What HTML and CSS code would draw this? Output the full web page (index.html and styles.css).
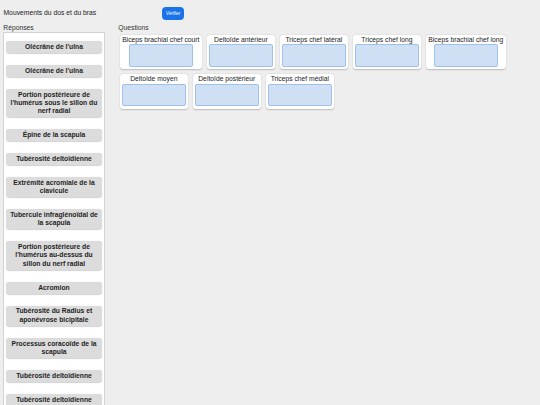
FILE: index.html
```html
<!DOCTYPE html>
<html lang="fr">
<head>
<meta charset="utf-8">
<title>Mouvements du dos et du bras</title>
<link rel="stylesheet" href="styles.css">
</head>
<body>
<header class="topbar">
  <h1 class="title">Mouvements du dos et du bras</h1>
  <button class="check-btn" type="button">Vérifier</button>
</header>
<main class="workspace">
  <section class="answers">
    <h2 class="section-label">Réponses</h2>
    <div class="answer-panel">
      <div class="answer">Olécrâne de l'ulna</div>
      <div class="answer">Olécrâne de l'ulna</div>
      <div class="answer">Portion postérieure de l'humérus sous le sillon du nerf radial</div>
      <div class="answer">Épine de la scapula</div>
      <div class="answer">Tubérosité deltoïdienne</div>
      <div class="answer">Extrémité acromiale de la clavicule</div>
      <div class="answer">Tubercule infraglénoïdal de la scapula</div>
      <div class="answer">Portion postérieure de l'humérus au-dessus du sillon du nerf radial</div>
      <div class="answer">Acromion</div>
      <div class="answer">Tubérosité du Radius et aponévrose bicipitale</div>
      <div class="answer">Processus coracoïde de la scapula</div>
      <div class="answer">Tubérosité deltoïdienne</div>
      <div class="answer">Tubérosité deltoïdienne</div>
    </div>
  </section>
  <section class="questions">
    <h2 class="section-label">Questions</h2>
    <div class="question-grid">
      <div class="question"><div class="q-label">Biceps brachial chef court</div><div class="drop"></div></div>
      <div class="question"><div class="q-label">Deltoïde antérieur</div><div class="drop"></div></div>
      <div class="question"><div class="q-label">Triceps chef latéral</div><div class="drop"></div></div>
      <div class="question"><div class="q-label">Triceps chef long</div><div class="drop"></div></div>
      <div class="question"><div class="q-label">Biceps brachial chef long</div><div class="drop"></div></div>
      <div class="question"><div class="q-label">Deltoïde moyen</div><div class="drop"></div></div>
      <div class="question"><div class="q-label">Deltoïde postérieur</div><div class="drop"></div></div>
      <div class="question"><div class="q-label">Triceps chef médial</div><div class="drop"></div></div>
    </div>
  </section>
</main>
</body>
</html>
```

FILE: styles.css
```css
html, body {
  margin: 0;
  padding: 0;
  height: 100%;
  overflow: hidden;
}
body {
  background: #eeeeee;
  font-family: "Liberation Sans", Arial, sans-serif;
  font-size: 6.75px;
  color: #222;
}
.topbar {
  display: flex;
  align-items: center;
  height: 13.3px;
  padding: 6.7px 0 0 3.5px;
}
.title {
  margin: 0;
  font-size: 6.75px;
  font-weight: normal;
  line-height: 8px;
  color: #222;
}
.check-btn {
  margin-left: 65.5px;
  width: 22.7px;
  height: 13.3px;
  padding: 0;
  border: none;
  border-radius: 4px;
  background: #1a73e8;
  color: #fff;
  font-family: "Liberation Sans", Arial, sans-serif;
  font-size: 4.5px;
  line-height: 13.3px;
}
.workspace {
  display: flex;
  align-items: flex-start;
  padding: 4.3px 0 0 3.3px;
}
.section-label {
  margin: 0;
  font-size: 6.75px;
  font-weight: normal;
  line-height: 8px;
  color: #333;
}
.answers {
  width: 101.4px;
  flex: none;
}
.answer-panel {
  box-sizing: border-box;
  background: #fff;
  border: 1px solid #d2d2d2;
  padding: 8px 2px 8px 2px;
  display: flex;
  flex-direction: column;
  gap: 12.3px;
}
.answer {
  background: #dcdcdc;
  border-radius: 3px;
  box-shadow: 0 0.6px 1px rgba(0, 0, 0, 0.18);
  padding: 1.6px 2.5px;
  font-weight: bold;
  line-height: 8.35px;
  text-align: center;
  color: #1e1e1e;
  flex: none;
}
.questions {
  margin-left: 12.6px;
  flex: 1;
}
.questions .section-label {
  margin-left: 1px;
}
.question-grid {
  display: flex;
  flex-wrap: wrap;
  align-items: flex-start;
  gap: 5.2px 5px;
  margin-top: 2.4px;
  padding-left: 2.5px;
}
.question {
  background: #fff;
  border-radius: 3px;
  box-shadow: 0 0.5px 1.5px rgba(0, 0, 0, 0.22);
  padding: 1px 2px 2.6px;
  display: flex;
  flex-direction: column;
  align-items: center;
}
.q-label {
  line-height: 7.8px;
  color: #222;
  white-space: nowrap;
  padding: 0 0.4px;
}
.drop {
  box-sizing: border-box;
  width: 64px;
  height: 22.4px;
  margin-top: 0.8px;
  background: #cfe0f4;
  border: 1px solid #9fc0e8;
  border-radius: 2px;
}
```
